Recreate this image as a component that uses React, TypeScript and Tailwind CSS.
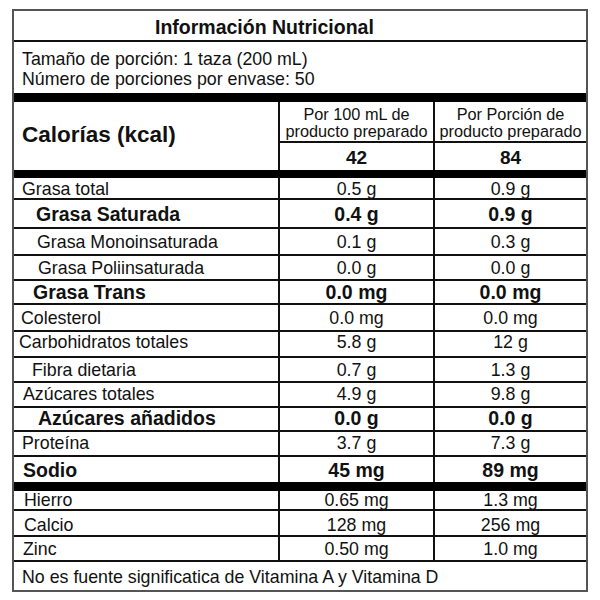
import React from "react";

interface Row {
    label: string;
    a: string;
    b: string;
    h: string;
    pl: string;
    pad?: string;
    bold?: boolean;
    last?: boolean;
}

const rows: Row[] = [
    { label: "Grasa total", a: "0.5 g", b: "0.9 g", h: "h-[22px]", pl: "pl-[8px]", pad: "pt-[3px]" },
    { label: "Grasa Saturada", a: "0.4 g", b: "0.9 g", h: "h-[29px]", pl: "pl-[22px]", pad: "pt-[2px]", bold: true },
    { label: "Grasa Monoinsaturada", a: "0.1 g", b: "0.3 g", h: "h-[27px]", pl: "pl-[23px]", pad: "pt-[2px]" },
    { label: "Grasa Poliinsaturada", a: "0.0 g", b: "0.0 g", h: "h-[25px]", pl: "pl-[24px]", pad: "pt-[2px]" },
    { label: "Grasa Trans", a: "0.0 mg", b: "0.0 mg", h: "h-[24px]", pl: "pl-[19px]", pad: "pt-[2px]", bold: true },
    { label: "Colesterol", a: "0.0 mg", b: "0.0 mg", h: "h-[27px]", pl: "pl-[7px]", pad: "pt-[3px]" },
    { label: "Carbohidratos totales", a: "5.8 g", b: "12 g", h: "h-[26px]", pl: "pl-[5px]", pad: "pb-[2px]" },
    { label: "Fibra dietaria", a: "0.7 g", b: "1.3 g", h: "h-[25px]", pl: "pl-[18px]", pad: "pt-[3px]" },
    { label: "Azúcares totales", a: "4.9 g", b: "9.8 g", h: "h-[25px]", pl: "pl-[9px]" },
    { label: "Azúcares añadidos", a: "0.0 g", b: "0.0 g", h: "h-[24px]", pl: "pl-[24px]", bold: true },
    { label: "Proteína", a: "3.7 g", b: "7.3 g", h: "h-[25px]", pl: "pl-[8px]" },
    { label: "Sodio", a: "45 mg", b: "89 mg", h: "h-[25px]", pl: "pl-[9px]", pad: "pt-[2px]", bold: true, last: true },
];

const minerals: Row[] = [
    { label: "Hierro", a: "0.65 mg", b: "1.3 mg", h: "h-[20px]", pl: "pl-[10px]", pad: "pt-[1px]" },
    { label: "Calcio", a: "128 mg", b: "256 mg", h: "h-[26px]", pl: "pl-[10px]", pad: "pt-[5px]" },
    { label: "Zinc", a: "0.50 mg", b: "1.0 mg", h: "h-[25px]", pl: "pl-[9px]", pad: "pt-[3px]" },
];

function NutrientRow({ row }: { row: Row }) {
    const text = row.bold ? "text-[19.5px] font-bold" : "text-[17.8px]";
    const pad = row.pad ?? "";
    return (
        <div
            className={`grid grid-cols-[266px_155px_1fr] leading-none ${row.h} ${row.last ? "" : "border-b-2 border-[#111]"}`}
        >
            <div className={`flex items-center border-r-2 border-[#111] ${pad} ${row.pl} ${text}`}>{row.label}</div>
            <div className={`flex items-center justify-center border-r-2 border-[#111] ${pad} ${text}`}>{row.a}</div>
            <div className={`flex items-center justify-center ${pad} ${text}`}>{row.b}</div>
        </div>
    );
}

export default function App() {
    return (
        <div className="min-h-[600px] w-[600px] bg-white pt-[9px] pl-[12px] font-['Liberation_Sans',Arial,sans-serif] text-[#111]">
            <div className="flex w-[576px] flex-col border-2 border-[#555]">
                {/* title */}
                <div className="flex h-[31px] items-center border-b-2 border-[#111] pt-[4px] pl-[141px] text-[19.5px] leading-none font-bold">
                    Información Nutricional
                </div>

                {/* serving info */}
                <div className="flex h-[51px] flex-col justify-center pt-[2px] pl-[8px] text-[17.8px] leading-[20px]">
                    <div>Tamaño de porción: 1 taza (200 mL)</div>
                    <div>Número de porciones por envase: 50</div>
                </div>

                <div className="h-[9px] bg-black" />

                {/* calories header */}
                <div className="grid h-[68px] grid-cols-[266px_155px_1fr]">
                    <div className="flex items-center border-r-2 border-[#111] pb-[2px] pl-[8px] text-[22.5px] font-bold">
                        Calorías (kcal)
                    </div>
                    <div className="flex flex-col border-r-2 border-[#111]">
                        <div className="flex h-[41px] flex-col items-center justify-center border-b-2 border-[#111] pt-[2px] text-[16.3px] leading-[17px]">
                            <span>Por 100 mL de</span>
                            <span>producto preparado</span>
                        </div>
                        <div className="flex flex-1 items-center justify-center pt-[2px] text-[19px] leading-none font-bold">42</div>
                    </div>
                    <div className="flex flex-col">
                        <div className="flex h-[41px] flex-col items-center justify-center border-b-2 border-[#111] pt-[2px] text-[16.3px] leading-[17px]">
                            <span>Por Porción de</span>
                            <span>producto preparado</span>
                        </div>
                        <div className="flex flex-1 items-center justify-center pt-[2px] text-[19px] leading-none font-bold">84</div>
                    </div>
                </div>

                <div className="h-[8px] bg-black" />

                {rows.map((r) => (
                    <NutrientRow key={r.label} row={r} />
                ))}

                <div className="h-[9px] bg-black" />

                {minerals.map((r) => (
                    <NutrientRow key={r.label} row={r} />
                ))}

                <div className="flex h-[28px] items-center pt-[3px] pl-[8px] text-[17.8px] leading-none">
                    No es fuente significatica de Vitamina A y Vitamina D
                </div>
            </div>
        </div>
    );
}
